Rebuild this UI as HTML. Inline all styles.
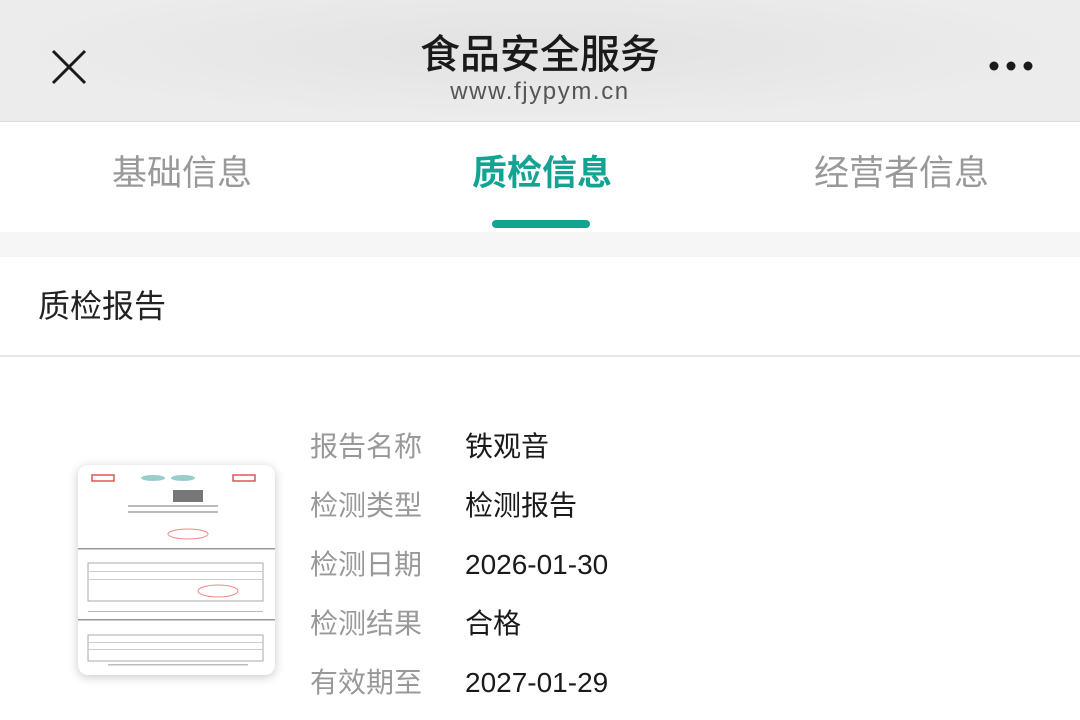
<!DOCTYPE html>
<html><head><meta charset="utf-8"><style>
body{margin:0;width:1080px;height:720px;overflow:hidden;background:#fff;font-family:"Liberation Sans","Noto Sans CJK SC",sans-serif;position:relative}
.hdr{position:absolute;left:0;top:0;width:1080px;height:121px;background:radial-gradient(ellipse at 50% 40%,#e2e2e2,#ececec 70%);border-bottom:1px solid #ddd}
.t1{position:absolute;left:0;width:1080px;text-align:center;top:31px;line-height:48px;font-size:40px;color:#1a1a1a;font-weight:500}
.t2{position:absolute;left:0;width:1080px;text-align:center;top:77px;line-height:30px;font-size:24px;color:#555;letter-spacing:1.6px}
.tab{position:absolute;top:152px;line-height:44px;font-size:35px;color:#999}
.gray{position:absolute;top:232px;left:0;width:1080px;height:25px;background:#f6f6f6}
.sec{position:absolute;left:38px;top:284px;line-height:44px;font-size:32px;color:#222}
.div{position:absolute;left:0;top:355px;width:1080px;height:2px;background:#e8e8e8}
.l{position:absolute;left:310px;font-size:28px;line-height:40px;color:#999}
.v{position:absolute;left:465px;font-size:28px;line-height:40px;color:#1a1a1a}
.card{position:absolute;left:78px;top:465px;width:197px;height:210px;border-radius:10px;background:#fff;box-shadow:0 2px 10px rgba(0,0,0,.22);overflow:hidden}
</style></head><body>
<div class="hdr"></div>
<svg style="position:absolute;left:50px;top:48px" width="38" height="38"><path d="M3 3L35 35M35 3L3 35" stroke="#1a1a1a" stroke-width="3"/></svg>
<div class="t1">食品安全服务</div>
<div class="t2">www.fjypym.cn</div>
<svg style="position:absolute;left:988px;top:59px" width="46" height="14"><circle cx="6" cy="7" r="4.5" fill="#1a1a1a"/><circle cx="23" cy="7" r="4.5" fill="#1a1a1a"/><circle cx="40" cy="7" r="4.5" fill="#1a1a1a"/></svg>
<div class="tab" style="left:112px">基础信息</div>
<div class="tab" style="left:472px;color:#13a393;font-weight:600">质检信息</div>
<div class="tab" style="left:814px">经营者信息</div>
<div style="position:absolute;left:492px;top:220px;width:98px;height:8px;border-radius:4px;background:#13a393"></div>
<div class="gray"></div>
<div class="sec">质检报告</div>
<div class="div"></div>
<div class="card"><svg width="197" height="210">
<rect x="14" y="10" width="22" height="6" fill="none" stroke="#d55" stroke-width="1.5"/><rect x="155" y="10" width="22" height="6" fill="none" stroke="#d55" stroke-width="1.5"/>
<ellipse cx="75" cy="13" rx="12" ry="3" fill="#9cc"/><ellipse cx="105" cy="13" rx="12" ry="3" fill="#9cc"/>
<rect x="95" y="25" width="30" height="12" fill="#777"/>
<rect x="50" y="40" width="90" height="2" fill="#bbb"/><rect x="50" y="46" width="90" height="2" fill="#bbb"/>
<ellipse cx="110" cy="69" rx="20" ry="5" fill="none" stroke="#e88"/>
<rect x="0" y="83" width="197" height="1.5" fill="#999"/>
<rect x="10" y="98" width="175" height="38" fill="none" stroke="#aaa"/>
<rect x="10" y="106" width="175" height="1" fill="#ccc"/><rect x="10" y="114" width="175" height="1" fill="#ccc"/>
<ellipse cx="140" cy="126" rx="20" ry="6" fill="none" stroke="#e88"/>
<rect x="10" y="146" width="175" height="1" fill="#bbb"/>
<rect x="0" y="154" width="197" height="1.5" fill="#999"/>
<rect x="10" y="170" width="175" height="26" fill="none" stroke="#aaa"/>
<rect x="10" y="177" width="175" height="1" fill="#ccc"/><rect x="10" y="184" width="175" height="1" fill="#ccc"/>
<rect x="30" y="199" width="140" height="1.5" fill="#bbb"/>
</svg></div>
<div class="l" style="top:427px">报告名称</div><div class="v" style="top:427px">铁观音</div>
<div class="l" style="top:486px">检测类型</div><div class="v" style="top:486px">检测报告</div>
<div class="l" style="top:545px">检测日期</div><div class="v" style="top:545px">2026-01-30</div>
<div class="l" style="top:604px">检测结果</div><div class="v" style="top:604px">合格</div>
<div class="l" style="top:663px">有效期至</div><div class="v" style="top:663px">2027-01-29</div>
</body></html>
